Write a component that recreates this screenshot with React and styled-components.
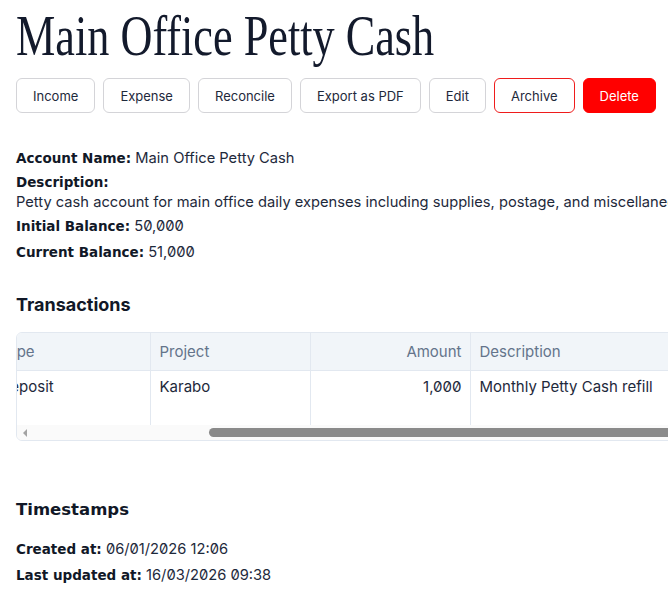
import React, { useEffect, useRef } from "react";
import styled, { createGlobalStyle } from "styled-components";

const GlobalStyle = createGlobalStyle`
  html, body {
    margin: 0;
    padding: 0;
    background: #ffffff;
    overflow-x: hidden;
  }
  body {
    font-family: Inter, "Noto Sans", sans-serif;
    color: #1e293b;
    font-variant-numeric: slashed-zero;
  }
`;

const Page = styled.div`
  padding: 0 16px 16px;
`;

const Title = styled.h1`
  margin: 0;
  display: inline-block;
  font-family: "Liberation Serif", serif;
  font-weight: 400;
  font-size: 56px;
  line-height: 72px;
  color: #131a2c;
  white-space: nowrap;
  transform: scaleX(0.79);
  transform-origin: left center;
`;

const Toolbar = styled.div`
  display: flex;
  gap: 8px;
  margin-top: 6px;
`;

const Button = styled.button`
  flex-shrink: 0;
  height: 35px;
  padding: 0 16px;
  border-radius: 6px;
  font-family: Inter, sans-serif;
  font-size: 13px;
  white-space: nowrap;
  cursor: pointer;
  border: 1px solid
    ${(p) => (p.$variant === "outlineDanger" ? "#ef1c1c" : p.$variant === "danger" ? "#ff0000" : "#d4d4d8")};
  background: ${(p) => (p.$variant === "danger" ? "#ff0000" : "#ffffff")};
  color: ${(p) => (p.$variant === "danger" ? "#ffffff" : "#1e293b")};
`;

const Details = styled.div`
  margin-top: 35px;
  font-size: 14.7px;
  line-height: 20px;
`;

const Field = styled.div`
  margin-top: ${(p) => p.$gap || 0}px;
  white-space: nowrap;
`;

const Label = styled.span`
  font-family: "DejaVu Sans", sans-serif;
  font-weight: 700;
  font-size: 13.5px;
  color: #111827;
`;

const Paragraph = styled.div`
  white-space: nowrap;
`;

const SectionTitle = styled.h2`
  margin: ${(p) => p.$top}px 0 0;
  font-family: ${(p) => (p.$wide ? '"DejaVu Sans", sans-serif' : "Inter, sans-serif")};
  font-size: ${(p) => (p.$wide ? "16.5px" : "18px")};
  font-weight: 700;
  line-height: 24px;
  color: #111827;
`;

const TableCard = styled.div`
  margin-top: 15px;
  width: 722px;
  box-sizing: border-box;
  border: 1px solid #e2e8f0;
  border-radius: 6px;
  overflow: hidden;
`;

const TableViewport = styled.div`
  overflow: hidden;
`;

const ScrollTrack = styled.div`
  display: flex;
  align-items: center;
  height: 15px;
  background: #fafafa;
`;

const ScrollArrow = styled.div`
  flex: 0 0 15px;
  display: flex;
  justify-content: center;
  align-items: center;
  &::before {
    content: "";
    width: 0;
    height: 0;
    border-top: 4px solid transparent;
    border-bottom: 4px solid transparent;
    border-right: 4px solid #a3a3a3;
  }
`;

const ScrollThumb = styled.div`
  flex: 0 0 auto;
  height: 9px;
  border-radius: 5px;
  background: #8a8a8a;
`;

const Table = styled.table`
  width: 975px;
  table-layout: fixed;
  border-collapse: collapse;
  font-size: 15px;
`;

const Th = styled.th`
  height: 37px;
  padding: 0 8px 0 9px;
  box-sizing: border-box;
  text-align: ${(p) => p.$align || "left"};
  background: #f1f5f9;
  color: #64748b;
  font-weight: 400;
  border-bottom: 1px solid #e2e8f0;
  border-left: 1px solid #e2e8f0;
  white-space: nowrap;
  &:first-child {
    border-left: none;
  }
`;

const Td = styled.td`
  height: 55px;
  padding: 6px 8px 0 9px;
  box-sizing: border-box;
  vertical-align: top;
  text-align: ${(p) => p.$align || "left"};
  color: #1e293b;
  border-left: 1px solid #e2e8f0;
  line-height: 20px;
  white-space: nowrap;
  &:first-child {
    border-left: none;
  }
`;

const Timestamps = styled.div`
  margin-top: 17px;
  font-size: 14.7px;
  line-height: 20px;
`;

const columns = [
  { key: "date", label: "Date", width: 223 },
  { key: "type", label: "Type", width: 160 },
  { key: "project", label: "Project", width: 160 },
  { key: "amount", label: "Amount", width: 160, align: "right" },
  { key: "description", label: "Description", width: 272 },
];

const rows = [
  {
    date: "06/01/2026",
    type: "Deposit",
    project: "Karabo",
    amount: "1,000",
    description: "Monthly Petty Cash refill",
  },
];

const actions = [
  { label: "Income" },
  { label: "Expense" },
  { label: "Reconcile" },
  { label: "Export as PDF" },
  { label: "Edit" },
  { label: "Archive", variant: "outlineDanger" },
  { label: "Delete", variant: "danger" },
];

const SCROLL_LEFT = 250;
const VIEW_WIDTH = 720;
const TABLE_WIDTH = 975;

const App = () => {
  const scroller = useRef(null);
  const trackLength = VIEW_WIDTH - 30;
  const thumbOffset = (SCROLL_LEFT / TABLE_WIDTH) * trackLength;
  const thumbWidth = (VIEW_WIDTH / TABLE_WIDTH) * trackLength;

  useEffect(() => {
    if (scroller.current) scroller.current.scrollLeft = SCROLL_LEFT;
  }, []);

  return (
    <Page>
      <GlobalStyle />
      <Title>Main Office Petty Cash</Title>

      <Toolbar>
        {actions.map((a) => (
          <Button key={a.label} $variant={a.variant}>
            {a.label}
          </Button>
        ))}
      </Toolbar>

      <Details>
        <Field>
          <Label>Account Name:</Label> Main Office Petty Cash
        </Field>
        <Field $gap={4}>
          <Label>Description:</Label>
        </Field>
        <Paragraph>
          Petty cash account for main office daily expenses including supplies, postage, and miscellaneous
          office costs.
        </Paragraph>
        <Field $gap={4}>
          <Label>Initial Balance:</Label> 50,000
        </Field>
        <Field $gap={6}>
          <Label>Current Balance:</Label> 51,000
        </Field>
      </Details>

      <SectionTitle $top={31}>Transactions</SectionTitle>
      <TableCard>
        <TableViewport ref={scroller}>
          <Table>
            <colgroup>
              {columns.map((c) => (
                <col key={c.key} style={{ width: c.width }} />
              ))}
            </colgroup>
            <thead>
              <tr>
                {columns.map((c) => (
                  <Th key={c.key} $align={c.align}>
                    {c.label}
                  </Th>
                ))}
              </tr>
            </thead>
            <tbody>
              {rows.map((r, i) => (
                <tr key={i}>
                  {columns.map((c) => (
                    <Td key={c.key} $align={c.align}>
                      {r[c.key]}
                    </Td>
                  ))}
                </tr>
              ))}
            </tbody>
          </Table>
        </TableViewport>
        <ScrollTrack>
          <ScrollArrow />
          <ScrollThumb style={{ marginLeft: thumbOffset, width: thumbWidth }} />
        </ScrollTrack>
      </TableCard>

      <SectionTitle $top={57} $wide>
        Timestamps
      </SectionTitle>
      <Timestamps>
        <Field>
          <Label>Created at:</Label> 06/01/2026 12:06
        </Field>
        <Field $gap={6}>
          <Label>Last updated at:</Label> 16/03/2026 09:38
        </Field>
      </Timestamps>
    </Page>
  );
};

export default App;
